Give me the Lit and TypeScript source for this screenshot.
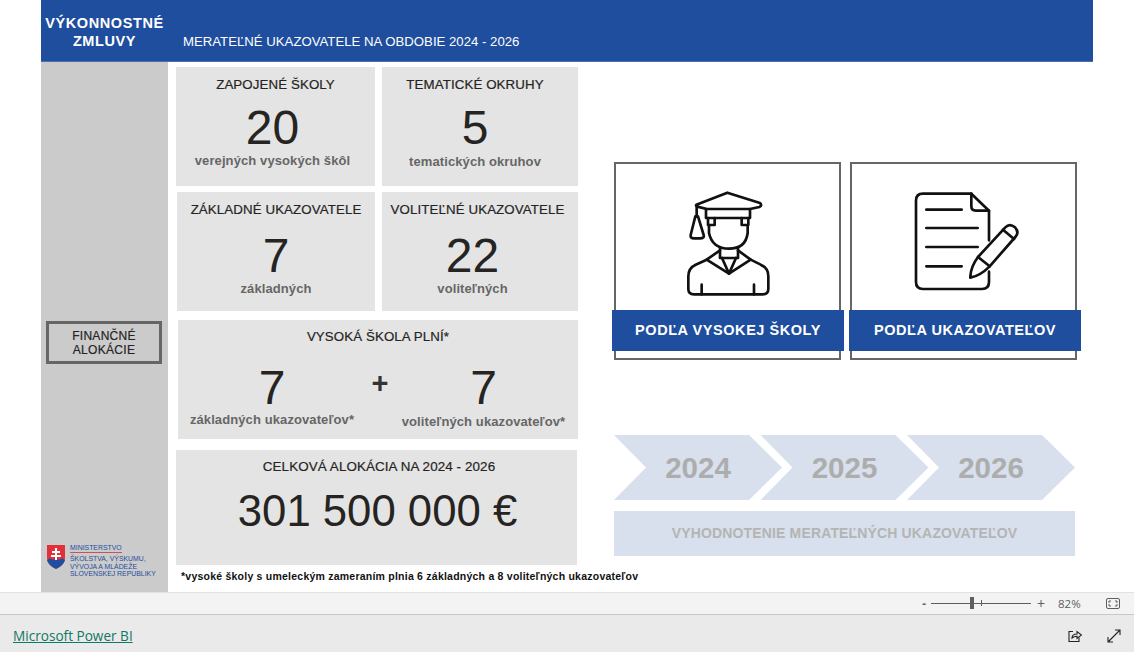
import { LitElement, html, css } from "lit";
import { customElement } from "lit/decorators.js";

@customElement("app-root")
export class AppRoot extends LitElement {
  static styles = css`
    :host { display: block; width: 1134px; height: 652px; overflow: hidden; background: #fff; font-family: "Liberation Sans", Arial, sans-serif; color: #252423; }
    .report { margin-left: 41px; width: 1052px; height: 592px; display: flex; flex-direction: column; }
    .head { height: 61px; background: #1f4e9e; color: #fff; display: flex; flex: none; border-bottom: 1px solid #4a70b0; box-sizing: content-box; }
    .brand { width: 127px; flex: none; text-align: center; font-weight: 700; font-size: 14.5px; line-height: 18px; padding-top: 14px; letter-spacing: 0.6px; box-sizing: border-box; white-space: nowrap; }
    .subt { padding-left: 15px; padding-top: 34px; font-size: 13.2px; line-height: 16px; white-space: nowrap; }
    .body { display: flex; flex: 1; min-height: 0; }
    .side { width: 127px; flex: none; background: #cbcbcb; display: flex; flex-direction: column; align-items: flex-start; }
    .finbtn { margin: 259px 0 0 5px; width: 116px; height: 43px; box-sizing: border-box; border: 3px solid #666; text-align: center; font-size: 12px; line-height: 14px; padding-top: 5px; letter-spacing: 0.3px; color: #252423; -webkit-text-stroke: 0.2px #252423; }
    .logo { margin: auto 0 14px 6px; display: flex; gap: 5px; }
    .logo svg { display: block; margin-top: 1px; }
    .lt { font-size: 6.9px; line-height: 7.6px; color: #1f4e9e; white-space: nowrap; }
    .lt .m { padding-bottom: 1px; border-bottom: 1px solid #c3555a; display: inline-block; margin-bottom: 2px; }
    .left { width: 410px; flex: none; padding: 5px 0 0 8px; box-sizing: border-box; display: flex; flex-direction: column; }
    .row { display: flex; gap: 7px; }
    .row2 { margin-top: 6px; }
    .card { background: #e4e4e4; height: 119px; box-sizing: border-box; text-align: center; display: flex; flex-direction: column; align-items: center; }
    .w1 { width: 199px; }
    .w2 { width: 196px; }
    .w3 { width: 198px; margin-left: 1px; }
    .ttl { font-size: 13.3px; line-height: 16px; padding-top: 10px; white-space: nowrap; letter-spacing: 0.1px; -webkit-text-stroke: 0.2px #252423; }
    .num { font-size: 48px; line-height: 54px; margin-top: 8px; color: #252423; }
    .sub { font-size: 13px; line-height: 15px; margin-top: -2px; font-weight: 700; color: #666; white-space: nowrap; letter-spacing: 0.1px; }
    .row2 .num { margin-top: 11px; }
    .off-a .num, .off-a .sub { margin-right: 6px; }
    .off-b { padding-right: 10px; }
    .off-b .sub { margin-top: -1px; }
    .off-d { padding-right: 5px; }
    .off-d .num, .off-d .sub { margin-right: 10px; }
    .wide { width: 400px; margin: 9px 0 0 2px; height: 119px; }
    .wide .ttl { padding-top: 9px; }
    .pair { display: flex; width: 100%; margin-top: 2px; }
    .pc { display: flex; flex-direction: column; align-items: center; }
    .pc.a { width: 188px; }
    .pc.b { width: 167px; }
    .pc .num { margin-top: 14px; }
    .pc .sub { margin-top: -3px; }
    .pc.b .sub { margin-top: -1px; }
    .plus { width: 40px; margin-left: -6px; text-align: center; font-size: 29px; line-height: 38px; font-weight: 700; color: #333; margin-top: 17px; }
    .total { width: 401px; margin-top: 11px; height: 115px; }
    .total .ttl { font-size: 13.4px; padding: 9px 0 0 5px; }
    .big { font-size: 43.7px; line-height: 54px; margin: 9px 0 0 2px; white-space: nowrap; }
    .note { font-size: 10.5px; line-height: 12px; font-weight: 700; padding: 5px 0 0 5px; color: #111; white-space: nowrap; letter-spacing: 0.23px; }
    .right { padding: 100px 0 0 34px; display: flex; flex-direction: column; }
    .picks { display: flex; gap: 5px; }
    .pick { width: 232px; display: flex; flex-direction: column; align-items: center; }
    .frame { width: 227px; height: 198px; box-sizing: border-box; border: 2px solid #666; display: flex; justify-content: center; align-items: flex-start; margin-right: 1px; }
    .frame.f2 { margin-right: 3px; }
    .frame svg { display: block; margin-top: 24px; }
    .frame .ic1 { margin-left: 2px; }
    .frame .ic2 { margin-left: 5px; }
    .btn { width: 232px; height: 41px; margin-top: -50px; background: #1f4e9e; color: #fff; font-weight: 700; font-size: 14.5px; line-height: 41px; text-align: center; letter-spacing: 0.55px; position: relative; }
    .years { display: flex; margin: 84px 0 0 2px; height: 65px; }
    .yr { width: 168px; height: 65px; background: #d7e0ec; color: #adadad; font-weight: 700; font-size: 29.5px; line-height: 65px; text-align: center; clip-path: polygon(0 0, 135px 0, 168px 32.5px, 135px 65px, 0 65px, 32px 32.5px); flex: none; }
    .yr + .yr { margin-left: -21.5px; }
    .eval { width: 461px; height: 45px; margin: 11px 0 0 2px; background: #d7e0ec; color: #b4b4b4; font-weight: 700; font-size: 14px; line-height: 45px; text-align: center; letter-spacing: 0.15px; }
    .status { height: 23px; box-sizing: border-box; background: #f3f3f3; border-top: 1px solid #e2e2e2; border-bottom: 1px solid #c8c8c8; display: flex; align-items: center; justify-content: flex-end; color: #605e5c; font-family: "Open Sans", sans-serif; font-size: 11.5px; }
    .minus { font-weight: 700; margin-right: 5px; }
    .slider { width: 100px; height: 1px; background: #605e5c; position: relative; }
    .thumb { position: absolute; left: 39px; top: -6px; width: 4px; height: 12px; background: #605e5c; }
    .tick { position: absolute; left: 50px; top: -3px; width: 1px; height: 6px; background: #605e5c; }
    .plus2 { margin-left: 6px; font-size: 14px; line-height: 14px; }
    .pct { margin-left: 13px; width: 48px; }
    .fit { margin-right: 14px; display: block; }
    .foot { height: 37px; box-sizing: border-box; background: #eaeaea; display: flex; align-items: center; padding: 4px 13px 0; }
    .foot a { font-family: "Open Sans", sans-serif; font-size: 13.6px; color: #117865; text-decoration: underline; }
    .tools { margin-left: auto; display: flex; gap: 25px; }
    .tools svg { display: block; }
  `;

  private student() {
    return html`<svg class="ic1" width="100" height="108" viewBox="235 115 300 324" fill="none" stroke="#111" stroke-width="8" stroke-linejoin="round" stroke-linecap="round">
      <path d="M287 165 L380 129 L478 160 Q486 168 476 172 L448 178 H318 L290 171 Q284 168 287 165Z"/>
      <path d="M316 178 V205 H448 V178"/>
      <path d="M288 172 V200"/>
      <path d="M284 200 L270 256 Q268 266 280 266 H298 Q312 266 309 256 L292 200Z"/>
      <path d="M322 205 V226 H342 V205"/>
      <path d="M443 205 V226 H423 V205"/>
      <path d="M325 226 V250 Q335 297 385 297 Q435 297 441 250 V226"/>
      <path d="M358 293 V325 H412 V293"/>
      <path d="M358 302 L318 330 L385 372 L450 330 L412 302"/>
      <path d="M364 325 L385 372 L406 325"/>
      <path d="M318 330 L285 345 Q263 355 263 380 V418 Q263 434 280 434 H486 Q503 434 503 418 V380 Q503 355 480 345 L450 330"/>
      <path d="M303 405 V434 M460 405 V434"/>
    </svg>`;
  }

  private doc() {
    return html`<svg class="ic2" width="106" height="108" viewBox="220 115 318 324" fill="none" stroke="#111" stroke-width="8" stroke-linejoin="round" stroke-linecap="round">
      <path d="M448 272 V183 L395 132 H250 Q229 132 229 153 V397 Q229 418 250 418 H427 Q448 418 448 397 V366"/>
      <path d="M395 132 V170 Q395 183 408 183 H448"/>
      <path d="M260 180 H366 M260 235 H414 M260 292 H414 M260 350 H366"/>
      <path d="M392 380 Q394 350 415 322 L497 233 Q510 220 526 233 Q540 248 527 262 L450 350 Q422 378 392 384 Z"/>
      <path d="M415 322 L450 350 M490 240 L523 268"/>
    </svg>`;
  }

  render() {
    return html`
      <div class="report">
        <div class="head">
          <div class="brand">VÝKONNOSTNÉ<br />ZMLUVY</div>
          <div class="subt">MERATEĽNÉ UKAZOVATELE NA OBDOBIE 2024 - 2026</div>
        </div>
        <div class="body">
          <div class="side">
            <div class="finbtn">FINANČNÉ<br />ALOKÁCIE</div>
            <div class="logo">
              <svg width="18" height="24" viewBox="0 0 18 24">
                <path d="M0 0 H18 V13 Q18 20 9 24 Q0 20 0 13Z" fill="#e0303a"/>
                <path d="M0 15 Q4 12 6 15 Q9 12 12 15 Q15 12 18 15 Q17 20 9 24 Q1 20 0 15Z" fill="#1f4e9e"/>
                <path d="M8 3 H10 V15 H8Z M5 6 H13 V8 H5Z M4 10 H14 V12 H4Z" fill="#fff"/>
              </svg>
              <div class="lt"><span class="m">MINISTERSTVO</span><br />ŠKOLSTVA, VÝSKUMU,<br />VÝVOJA A MLÁDEŽE<br />SLOVENSKEJ REPUBLIKY</div>
            </div>
          </div>
          <div class="left">
            <div class="row">
              <div class="card w1 off-a"><div class="ttl">ZAPOJENÉ ŠKOLY</div><div class="num">20</div><div class="sub">verejných vysokých škôl</div></div>
              <div class="card w2 off-b"><div class="ttl">TEMATICKÉ OKRUHY</div><div class="num">5</div><div class="sub">tematických okruhov</div></div>
            </div>
            <div class="row row2">
              <div class="card w3"><div class="ttl">ZÁKLADNÉ UKAZOVATELE</div><div class="num">7</div><div class="sub">základných</div></div>
              <div class="card w2 off-d"><div class="ttl">VOLITEĽNÉ UKAZOVATELE</div><div class="num">22</div><div class="sub">voliteľných</div></div>
            </div>
            <div class="card wide">
              <div class="ttl">VYSOKÁ ŠKOLA PLNÍ*</div>
              <div class="pair">
                <div class="pc a"><div class="num">7</div><div class="sub">základných ukazovateľov*</div></div>
                <div class="plus">+</div>
                <div class="pc b"><div class="num">7</div><div class="sub">voliteľných ukazovateľov*</div></div>
              </div>
            </div>
            <div class="card total">
              <div class="ttl">CELKOVÁ ALOKÁCIA NA 2024 - 2026</div>
              <div class="big">301 500 000 €</div>
            </div>
            <div class="note">*vysoké školy s umeleckým zameraním plnia 6 základných a 8 voliteľných ukazovateľov</div>
          </div>
          <div class="right">
            <div class="picks">
              <div class="pick"><div class="frame">${this.student()}</div><div class="btn">PODĽA VYSOKEJ ŠKOLY</div></div>
              <div class="pick"><div class="frame f2">${this.doc()}</div><div class="btn">PODĽA UKAZOVATEĽOV</div></div>
            </div>
            <div class="years">
              <div class="yr">2024</div><div class="yr">2025</div><div class="yr">2026</div>
            </div>
            <div class="eval">VYHODNOTENIE MERATEĽNÝCH UKAZOVATEĽOV</div>
          </div>
        </div>
      </div>
      <div class="status">
        <span class="minus">-</span>
        <div class="slider"><div class="thumb"></div><div class="tick"></div></div>
        <span class="plus2">+</span>
        <span class="pct">82%</span>
        <svg class="fit" width="14" height="11" viewBox="0 0 14 11" fill="none" stroke="#605e5c">
          <rect x="0.5" y="0.5" width="13" height="10" rx="1.5"/>
          <path d="M3 5 V3 H5 M9 3 H11 V5 M11 6 V8 H9 M5 8 H3 V6"/>
        </svg>
      </div>
      <div class="foot">
        <a href="#">Microsoft Power BI</a>
        <div class="tools">
          <svg width="14" height="14" viewBox="0 0 14 14" fill="none" stroke="#222" stroke-width="1.1">
            <path d="M5 2.5 H1 V12.5 H11 V8.5"/>
            <path d="M4 9 Q4 5 9 5 V2.5 L13.5 6 L9 9.5 V7.2 Q6 7 4 9Z"/>
          </svg>
          <svg width="14" height="14" viewBox="0 0 14 14" fill="none" stroke="#222" stroke-width="1.1">
            <path d="M1 13 L13 1 M8 1 H13 V6 M1 8 V13 H6"/>
          </svg>
        </div>
      </div>
    `;
  }
}
